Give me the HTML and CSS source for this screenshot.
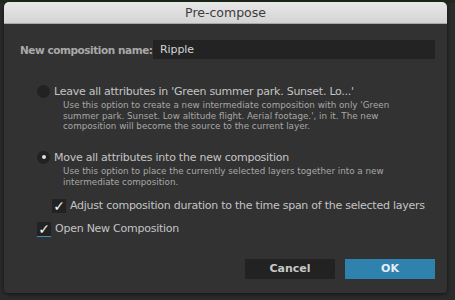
FILE: index.html
```html
<!DOCTYPE html>
<html lang="en">
  <head>
    <meta charset="UTF-8" />
    <meta name="viewport" content="width=device-width, initial-scale=1.0" />
    <title>Pre-compose</title>
    <link rel="stylesheet" href="styles.css">
  </head>
  <body>
    <div class="dialog">
      <div class="titlebar">Pre-compose</div>

      <div class="content">
        <div class="name-row">
          <label for="compName">New composition name:</label>
          <input type="text" id="compName" class="name-input" value="Ripple" />
        </div>

        <div class="option">
          <div class="option-head">
            <span class="radio"></span>
            <span class="option-label">Leave all attributes in 'Green summer park. Sunset. Lo...'</span>
          </div>
          <p class="option-desc">
            Use this option to create a new intermediate composition with only 'Green<br />
            summer park. Sunset. Low altitude flight. Aerial footage.', in it. The new<br />
            composition will become the source to the current layer.
          </p>
        </div>

        <div class="option option-second">
          <div class="option-head">
            <span class="radio radio-on"></span>
            <span class="option-label">Move all attributes into the new composition</span>
          </div>
          <p class="option-desc">
            Use this option to place the currently selected layers together into a new<br />
            intermediate composition.
          </p>
          <div class="check-row check-nested">
            <span class="check">&#10003;</span>
            <span class="check-label">Adjust composition duration to the time span of the selected layers</span>
          </div>
        </div>

        <div class="check-row check-open">
          <span class="check check-focus">&#10003;</span>
          <span class="check-label">Open New Composition</span>
        </div>

        <div class="buttons">
          <button class="btn btn-cancel">Cancel</button>
          <button class="btn btn-ok">OK</button>
        </div>
      </div>
    </div>
  </body>
</html>
```

FILE: styles.css
```css
body {
  margin: 0;
  width: 455px;
  height: 300px;
  overflow: hidden;
  font-family: "DejaVu Sans", sans-serif;
  background: linear-gradient(to bottom, #1f2a1c 0, #1f2a1c 3px, #2b2b2b 3px);
}

.dialog {
  margin: 2px 0 0 4px;
  width: 443px;
  height: 291px;
  background: #323232;
  border-radius: 5px 5px 4px 4px;
  overflow: hidden;
  box-shadow: 0 1px 4px rgba(0, 0, 0, 0.6);
}

.titlebar {
  height: 21px;
  line-height: 21px;
  text-align: center;
  font-size: 12.5px;
  color: #3c3c3c;
  background: linear-gradient(to bottom, #e8e8e8, #d4d4d4);
  border-bottom: 1px solid #a8a8a8;
}

.content {
  padding: 16px 12px 0 16px;
}

.name-row {
  display: flex;
  align-items: center;
  justify-content: space-between;
}

.name-row label {
  font-size: 10.5px;
  font-weight: bold;
  letter-spacing: -0.45px;
  color: #a9a9a9;
  white-space: nowrap;
}

.name-input {
  width: 282px;
  height: 19px;
  box-sizing: border-box;
  border: none;
  padding: 0 7px;
  background: #232323;
  color: #d4d4d4;
  font-family: inherit;
  font-size: 11px;
  letter-spacing: -0.1px;
}

.option {
  margin-top: 25px;
  padding-left: 17px;
}

.option-second {
  margin-top: 18px;
}

.option-head {
  display: flex;
  align-items: center;
  height: 14px;
}

.radio {
  width: 13px;
  height: 13px;
  border-radius: 50%;
  background: #222;
  margin-right: 4px;
  flex: none;
  display: flex;
  align-items: center;
  justify-content: center;
}

.radio-on::after {
  content: "";
  width: 4px;
  height: 4px;
  border-radius: 50%;
  background: #e0e0e0;
}

.option-label {
  font-size: 11px;
  letter-spacing: -0.25px;
  color: #c4c4c4;
  white-space: nowrap;
}

.option-desc {
  margin: 2px 0 0 26px;
  font-size: 8.75px;
  line-height: 10.7px;
  color: #a8a8a8;
  white-space: nowrap;
}

.check-row {
  display: flex;
  align-items: center;
}

.check-nested {
  margin: 11px 0 0 15px;
}

.check-open {
  margin: 9px 0 0 17px;
}

.check {
  width: 14px;
  height: 14px;
  background: #222;
  color: #f4f4f4;
  font-size: 14px;
  font-weight: bold;
  line-height: 14px;
  text-align: center;
  margin-right: 4px;
  flex: none;
}

.check-focus {
  box-shadow: 0 1px 0 #3d8fc0;
}

.check-label {
  font-size: 11px;
  letter-spacing: -0.25px;
  color: #c4c4c4;
  white-space: nowrap;
}

.buttons {
  display: flex;
  justify-content: flex-end;
  gap: 10px;
  margin-top: 23px;
}

.btn {
  width: 90px;
  height: 20px;
  border: none;
  font-family: inherit;
  font-size: 11px;
  font-weight: bold;
  padding: 0;
}

.btn-cancel {
  background: #222;
  color: #c8c8c8;
}

.btn-ok {
  background: #2f82ae;
  color: #e4eef4;
}
```
